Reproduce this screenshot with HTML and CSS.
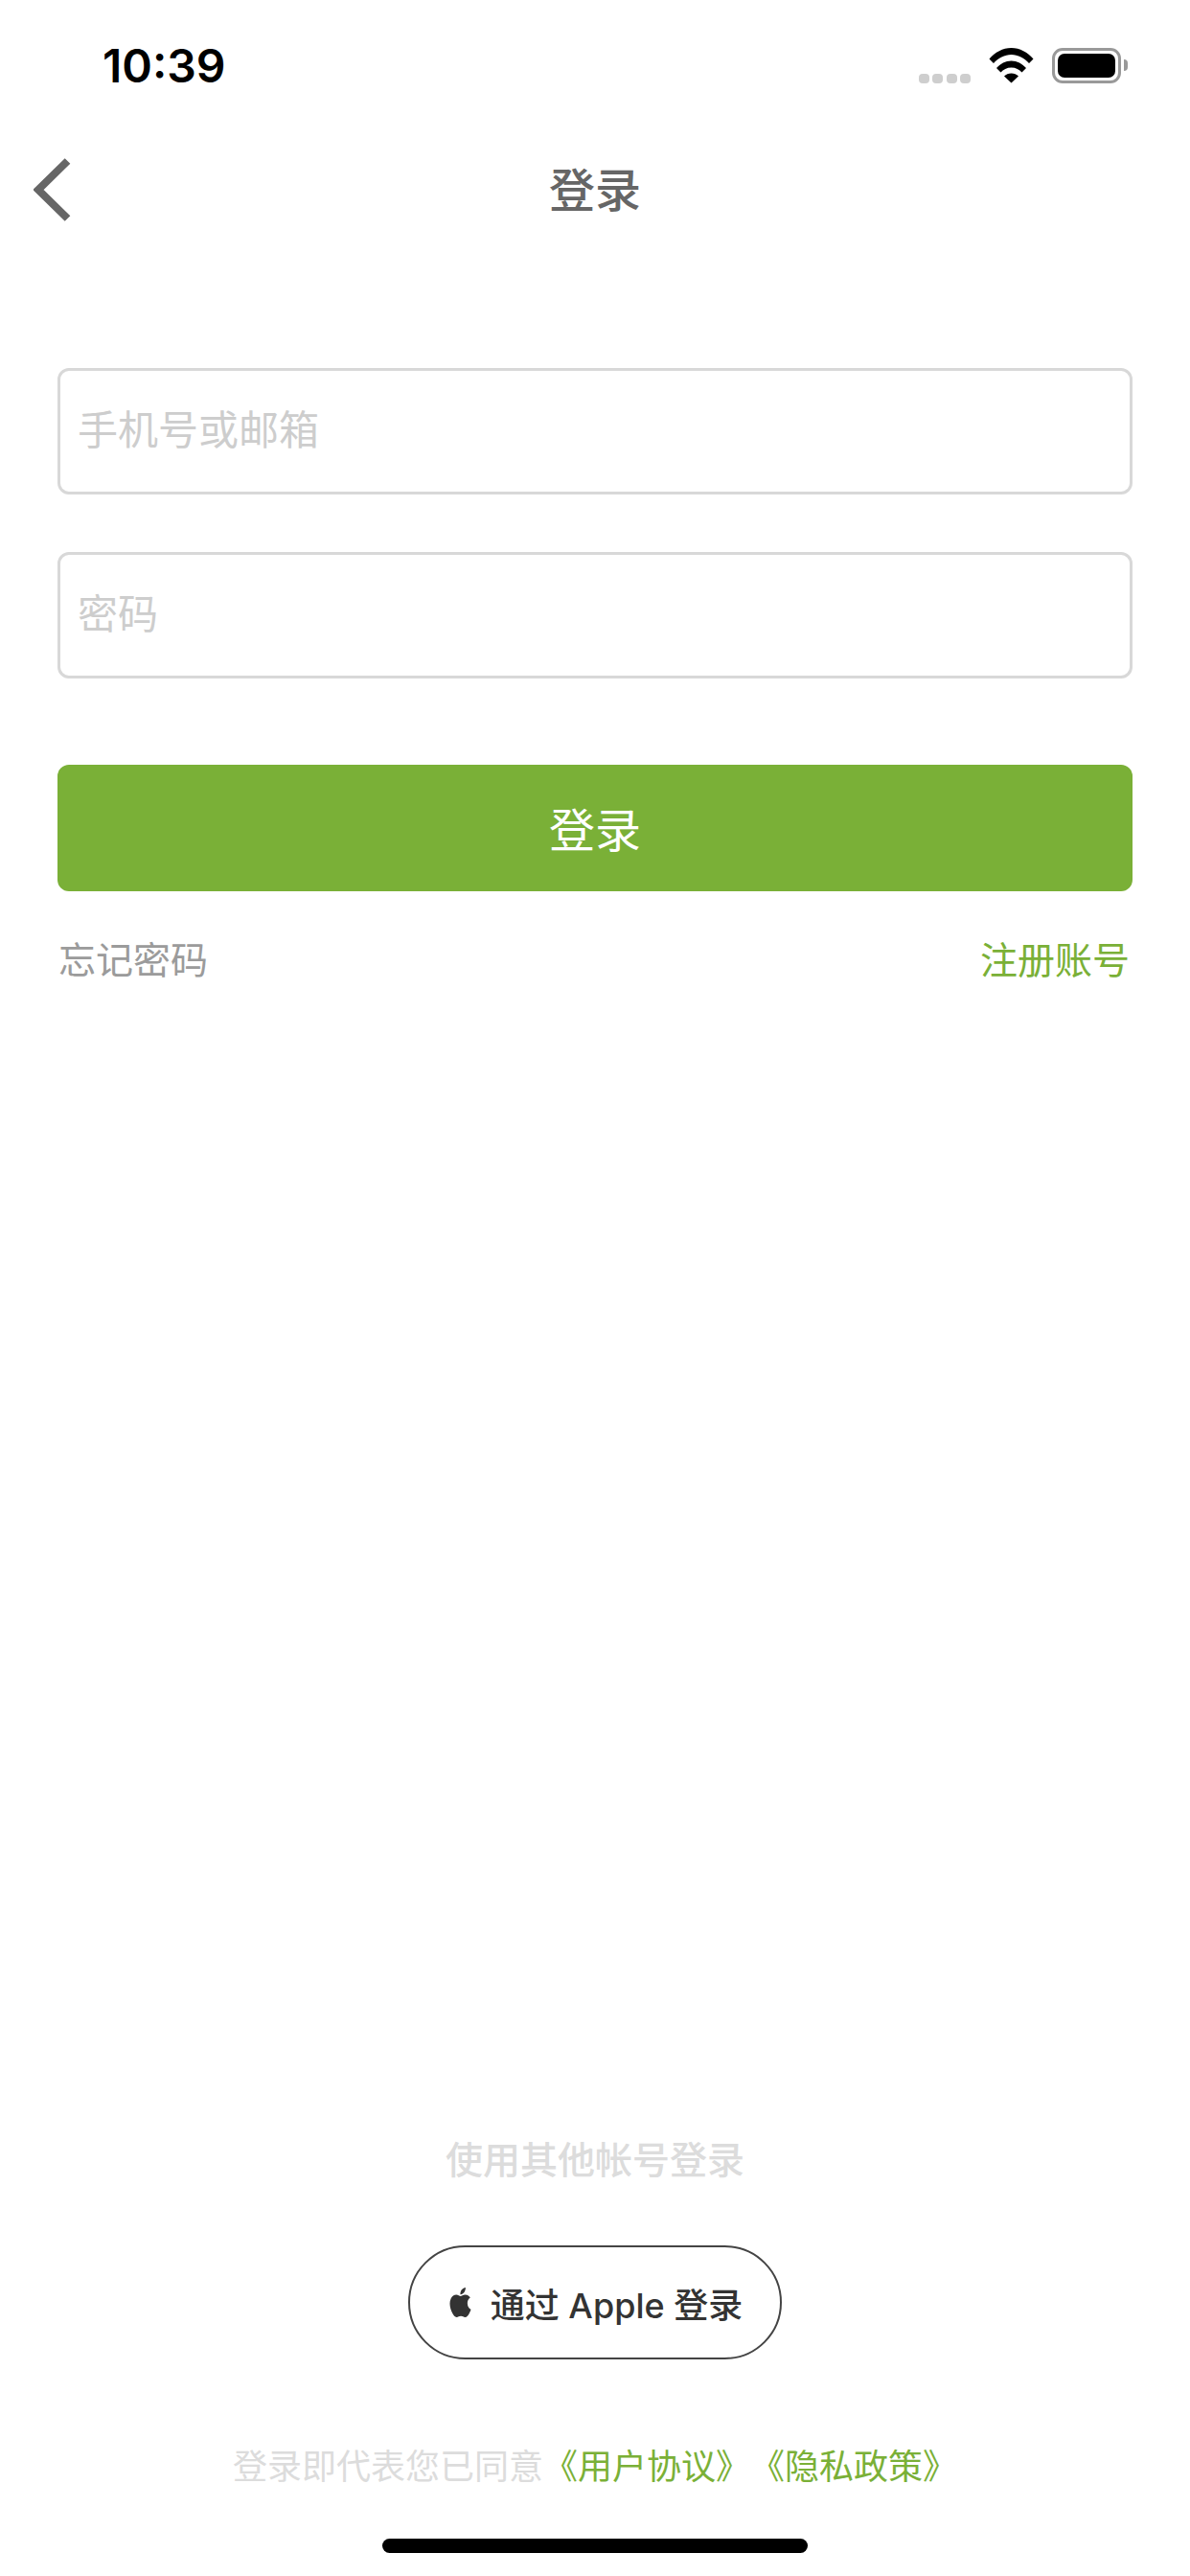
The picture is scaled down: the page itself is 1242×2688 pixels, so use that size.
FILE: index.html
```html
<!DOCTYPE html>
<html lang="zh-CN">
<head>
  <meta charset="UTF-8" />
  <title>登录</title>
  <link rel="stylesheet" href="styles.css">
</head>
<body>
  <div class="page">
    <div class="status">
      <span class="time">10:39</span>
      <div class="status-icons">
        <div class="dots"><i></i><i></i><i></i><i></i></div>
        <svg class="wifi" width="47" height="37" viewBox="0 0 47 37">
          <path d="M0.5 11.5C6.5 4.5 14.5 0 23.5 0S40.500 4.500 46.500 11.500L42 16C37 10.500 30.500 7 23.500 7S10 10.500 5 16Z"/>
          <path d="M8 21C12 16.500 17.500 13.500 23.500 13.500S35 16.500 39 21L34.500 25.500C32 22.500 28 20.500 23.500 20.500S15 22.500 12.500 25.500Z"/>
          <path d="M16 29.500C18 27.500 20.500 26.500 23.500 26.500S29 27.500 31 29.500L23.500 36.500Z"/>
        </svg>
        <div class="battery"><div class="battery-level"></div></div>
        <div class="battery-nub"></div>
      </div>
    </div>

    <div class="nav">
      <svg class="back" width="40" height="66" viewBox="0 0 40 66">
        <path d="M35.500 3L5 33L35.500 63" />
      </svg>
      <h1>登录</h1>
    </div>

    <form class="form">
      <input class="field" type="text" placeholder="手机号或邮箱">
      <input class="field" type="password" placeholder="密码">
      <button class="submit" type="button">登录</button>
      <div class="links">
        <a class="muted-link">忘记密码</a>
        <a class="green-link">注册账号</a>
      </div>
    </form>

    <div class="bottom">
      <p class="other">使用其他帐号登录</p>
      <button class="apple" type="button">
        <svg width="27" height="31" viewBox="0 0 24 24" preserveAspectRatio="none">
          <path d="M12.152 6.896c-.948 0-2.415-1.078-3.96-1.04-2.04.027-3.91 1.183-4.961 3.014-2.117 3.675-.546 9.103 1.519 12.09 1.013 1.454 2.208 3.09 3.792 3.039 1.52-.065 2.09-.987 3.935-.987 1.831 0 2.35.987 3.96.948 1.637-.026 2.676-1.48 3.676-2.948 1.156-1.688 1.636-3.325 1.662-3.415-.039-.013-3.182-1.221-3.22-4.857-.026-3.04 2.48-4.494 2.597-4.559-1.429-2.09-3.623-2.324-4.39-2.376-2-.156-3.675 1.09-4.61 1.09zM15.53 3.83c.843-1.012 1.4-2.427 1.245-3.83-1.207.052-2.662.805-3.532 1.818-.78.896-1.454 2.338-1.273 3.714 1.338.104 2.715-.688 3.559-1.701"/>
        </svg>
        <span>通过 Apple 登录</span>
      </button>
      <p class="terms">登录即代表您已同意<a>《用户协议》</a><a>《隐私政策》</a></p>
      <div class="home-bar"></div>
    </div>
  </div>
</body>
</html>
```

FILE: styles.css
```css
* {
  box-sizing: border-box;
}
body {
  margin: 0;
  background: white;
  font-family: "Noto Sans CJK SC", "Noto Sans", sans-serif;
}
.page {
  width: 1242px;
  height: 2688px;
  display: flex;
  flex-direction: column;
}

/* status bar */
.status {
  height: 136px;
  padding: 0 65px 0 107px;
  display: flex;
  align-items: center;
  justify-content: space-between;
}
.time {
  font-family: Inter, sans-serif;
  font-size: 48px;
  font-weight: 600;
  color: black;
}
.status-icons {
  display: flex;
  align-items: center;
}
.dots {
  display: flex;
  gap: 3.5px;
  margin-right: 19px;
  align-self: flex-end;
}
.dots i {
  width: 11px;
  height: 10px;
  border-radius: 4px;
  background: #cecece;
}
.wifi {
  fill: black;
  margin-right: 19px;
}
.battery {
  width: 72px;
  height: 37px;
  padding: 3px;
  border: 3px solid #999;
  border-radius: 11px;
  display: flex;
}
.battery-level {
  flex: 1;
  background: black;
  border-radius: 7px;
}
.battery-nub {
  width: 4px;
  height: 12px;
  margin-left: 3px;
  background: #999;
  border-radius: 0 6px 6px 0;
}

/* nav */
.nav {
  height: 124px;
  padding-left: 35px;
  display: grid;
  grid-template-columns: 1fr auto 1fr;
  align-items: center;
}
.back {
  fill: none;
  stroke: #666;
  stroke-width: 8;
}
.nav h1 {
  grid-column: 2;
  margin: 0 35px 6px 0;
  font-size: 48px;
  font-weight: 500;
  color: #666;
}

/* form */
.form {
  margin-top: 124px;
  padding: 0 60px;
  display: flex;
  flex-direction: column;
}
.field {
  height: 132px;
  padding: 0 18px 10px;
  margin-bottom: 60px;
  border: 3px solid #d8d8d8;
  border-radius: 12px;
  font-family: inherit;
  font-size: 42px;
}
.field::placeholder {
  color: #cdcdcd;
}
.submit {
  height: 132px;
  margin-top: 30px;
  padding-bottom: 4px;
  border: none;
  border-radius: 12px;
  background: #7ab037;
  color: white;
  font-family: inherit;
  font-size: 48px;
}
.links {
  margin-top: 41px;
  padding: 0 3px 0 1px;
  display: flex;
  justify-content: space-between;
  font-size: 39px;
  line-height: 56px;
}
.muted-link {
  color: #9b9b9b;
}
.green-link {
  color: #7ab037;
}

/* bottom */
.bottom {
  margin-top: auto;
  display: flex;
  flex-direction: column;
  align-items: center;
}
.other {
  margin: 0;
  font-size: 39px;
  line-height: 60px;
  font-weight: 500;
  color: #dcdcdc;
}
.apple {
  width: 390px;
  height: 119px;
  margin-top: 62px;
  padding: 0;
  border: 2px solid #444;
  border-radius: 60px;
  background: white;
  display: flex;
  align-items: center;
  justify-content: center;
  gap: 18px;
  color: #333;
  font-family: Inter, "Noto Sans CJK SC", sans-serif;
  font-size: 36px;
  font-weight: 500;
}
.apple svg {
  fill: #333;
}
.terms {
  margin: 82px 0 0;
  font-size: 36px;
  line-height: 54px;
  color: #dcdcdc;
  font-kerning: none;
  text-spacing-trim: space-all;
}
.terms a {
  color: #7ab037;
}
.home-bar {
  width: 444px;
  height: 15px;
  margin: 51px 0 24px;
  border-radius: 8px;
  background: black;
}
```
